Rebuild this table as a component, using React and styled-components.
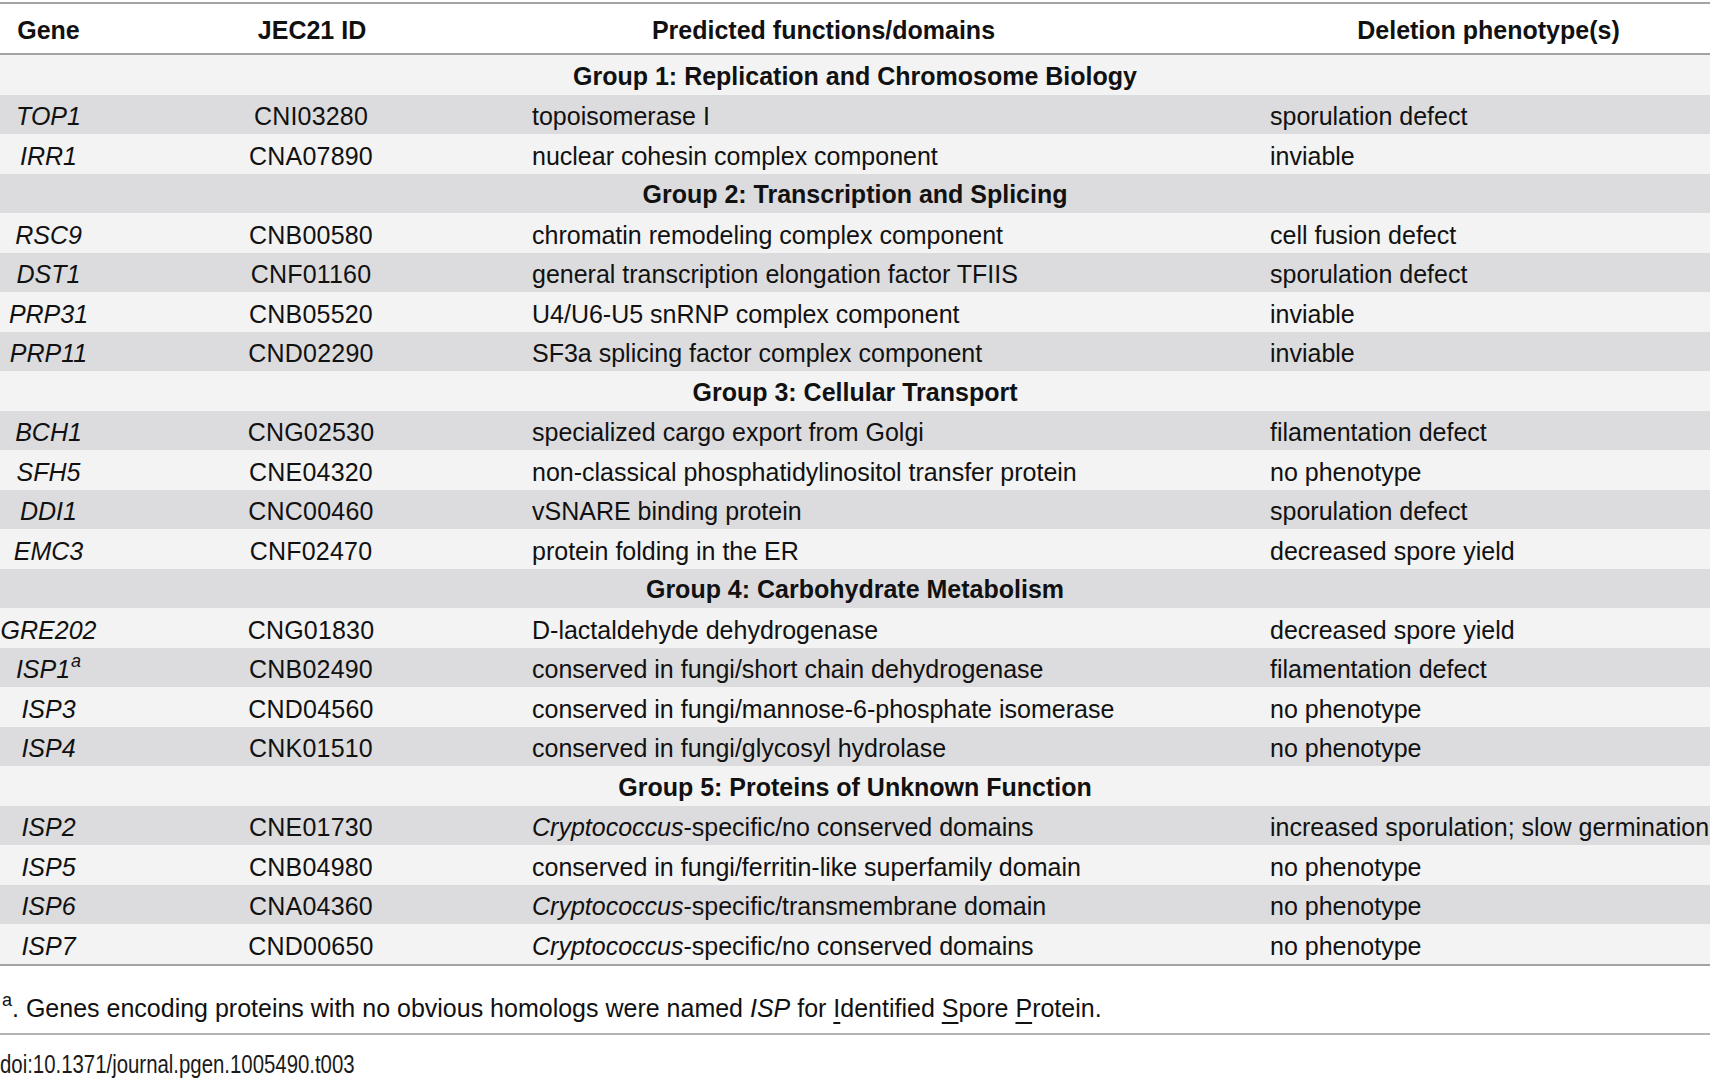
import React from 'react'
import styled, { createGlobalStyle, css } from 'styled-components'

const GlobalStyle = createGlobalStyle`
  html, body {
    margin: 0;
    padding: 0;
    background: #ffffff;
  }
  body {
    font-family: "Liberation Sans", Arial, Helvetica, sans-serif;
    color: #111111;
  }
`

const COLS = '97px 430px 731px 1fr'

export const Page = styled.div`
  width: 1710px;
  padding-top: 2px;
`

export const Table = styled.div`
  border-top: 2px solid #a3a3a3;
  border-bottom: 2px solid #a3a3a3;
`

export const HeadRow = styled.div`
  display: grid;
  grid-template-columns: ${ COLS };
  height: 49px;
  align-items: center;
  border-bottom: 2px solid #a3a3a3;
  background: #ffffff;
`

export const HeadCell = styled.div`
  font-size: 25px;
  font-weight: 700;
  text-align: center;
  white-space: nowrap;
  padding-top: 4px;
  ${ ({ shift }) => shift && css`
    padding-left: ${ shift > 0 ? shift : 0 }px;
    padding-right: ${ shift < 0 ? -shift : 0 }px;
  ` }
`

export const Row = styled.div`
  display: grid;
  grid-template-columns: ${ COLS };
  height: 39.5px;
  align-items: center;
  font-size: 25px;
  white-space: nowrap;
  background: ${ ({ dark }) => dark ? '#dcdcde' : '#f3f3f3' };
`

export const GroupRow = styled.div`
  height: 39.5px;
  display: flex;
  align-items: center;
  justify-content: center;
  padding-top: 3px;
  box-sizing: border-box;
  font-size: 25px;
  font-weight: 700;
  white-space: nowrap;
  background: ${ ({ dark }) => dark ? '#dcdcde' : '#f3f3f3' };
`

export const GeneCell = styled.div`
  font-style: italic;
  text-align: center;
  padding-top: 5px;
  sup {
    font-size: 18px;
    vertical-align: 11px;
    line-height: 0;
    margin-left: 1px;
  }
`

export const IdCell = styled.div`
  text-align: center;
  padding-top: 5px;
  padding-right: 2px;
  letter-spacing: 0.2px;
`

export const TextCell = styled.div`
  padding-left: ${ ({ pad }) => pad }px;
  padding-top: 5px;
  i {
    font-style: italic;
  }
`

export const Footnote = styled.div`
  font-size: 25px;
  line-height: 28px;
  padding: 28px 0 11px 2px;
  border-bottom: 2px solid #b4b4b4;
  white-space: nowrap;
  sup {
    font-size: 18px;
    vertical-align: 11px;
    line-height: 0;
  }
  u {
    text-decoration: underline;
    text-underline-offset: 5px;
  }
`

export const Doi = styled.div`
  font-size: 25px;
  line-height: 28px;
  padding-top: 15px;
  color: #1a1a1a;
  white-space: nowrap;
  span {
    display: inline-block;
    transform: scaleX(0.815);
    transform-origin: left center;
  }
`

const groups = [
  {
    title: 'Group 1: Replication and Chromosome Biology',
    rows: [
      ['TOP1', 'CNI03280', 'topoisomerase I', 'sporulation defect'],
      ['IRR1', 'CNA07890', 'nuclear cohesin complex component', 'inviable'],
    ],
  },
  {
    title: 'Group 2: Transcription and Splicing',
    rows: [
      ['RSC9', 'CNB00580', 'chromatin remodeling complex component', 'cell fusion defect'],
      ['DST1', 'CNF01160', 'general transcription elongation factor TFIIS', 'sporulation defect'],
      ['PRP31', 'CNB05520', 'U4/U6-U5 snRNP complex component', 'inviable'],
      ['PRP11', 'CND02290', 'SF3a splicing factor complex component', 'inviable'],
    ],
  },
  {
    title: 'Group 3: Cellular Transport',
    rows: [
      ['BCH1', 'CNG02530', 'specialized cargo export from Golgi', 'filamentation defect'],
      ['SFH5', 'CNE04320', 'non-classical phosphatidylinositol transfer protein', 'no phenotype'],
      ['DDI1', 'CNC00460', 'vSNARE binding protein', 'sporulation defect'],
      ['EMC3', 'CNF02470', 'protein folding in the ER', 'decreased spore yield'],
    ],
  },
  {
    title: 'Group 4: Carbohydrate Metabolism',
    rows: [
      ['GRE202', 'CNG01830', 'D-lactaldehyde dehydrogenase', 'decreased spore yield'],
      ['ISP1', 'CNB02490', 'conserved in fungi/short chain dehydrogenase', 'filamentation defect', 'a'],
      ['ISP3', 'CND04560', 'conserved in fungi/mannose-6-phosphate isomerase', 'no phenotype'],
      ['ISP4', 'CNK01510', 'conserved in fungi/glycosyl hydrolase', 'no phenotype'],
    ],
  },
  {
    title: 'Group 5: Proteins of Unknown Function',
    rows: [
      ['ISP2', 'CNE01730', '*Cryptococcus*-specific/no conserved domains', 'increased sporulation; slow germination'],
      ['ISP5', 'CNB04980', 'conserved in fungi/ferritin-like superfamily domain', 'no phenotype'],
      ['ISP6', 'CNA04360', '*Cryptococcus*-specific/transmembrane domain', 'no phenotype'],
      ['ISP7', 'CND00650', '*Cryptococcus*-specific/no conserved domains', 'no phenotype'],
    ],
  },
]

// *word* marks the italic part of a function text
const renderFn = (text) => {
  const parts = text.split('*')
  return parts.map((p, i) => (i % 2 === 1 ? <i key={ i }>{ p }</i> : <React.Fragment key={ i }>{ p }</React.Fragment>))
}

const App = () => {
  let idx = 0
  const body = []
  groups.forEach((g) => {
    body.push(<GroupRow key={ g.title } dark={ idx % 2 === 1 }>{ g.title }</GroupRow>)
    idx++
    g.rows.forEach(([gene, id, fn, pheno, mark]) => {
      body.push(
        <Row key={ gene } dark={ idx % 2 === 1 }>
          <GeneCell>
            { gene }
            { mark && <sup>{ mark }</sup> }
          </GeneCell>
          <IdCell>{ id }</IdCell>
          <TextCell pad={ 5 }>{ renderFn(fn) }</TextCell>
          <TextCell pad={ 12 }>{ pheno }</TextCell>
        </Row>
      )
      idx++
    })
  })

  return (
    <React.Fragment>
      <GlobalStyle />
      <Page>
        <Table>
          <HeadRow>
            <HeadCell>Gene</HeadCell>
            <HeadCell>JEC21 ID</HeadCell>
            <HeadCell shift={ -138 }>Predicted functions/domains</HeadCell>
            <HeadCell shift={ 9 }>Deletion phenotype(s)</HeadCell>
          </HeadRow>
          { body }
        </Table>
        <Footnote>
          <sup>a</sup>. Genes encoding proteins with no obvious homologs were named <i>ISP</i> for <u>I</u>dentified <u>S</u>pore <u>P</u>rotein.
        </Footnote>
        <Doi><span>doi:10.1371/journal.pgen.1005490.t003</span></Doi>
      </Page>
    </React.Fragment>
  )
}

export default App
